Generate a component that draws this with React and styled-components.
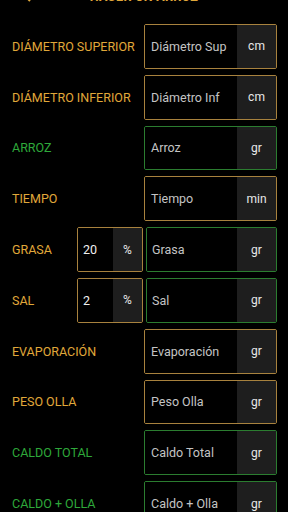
import React from "react"
import styled, { createGlobalStyle } from "styled-components"

const GlobalStyle = createGlobalStyle`
  html, body {
    margin: 0;
    padding: 0;
    background: #000;
    font-family: Roboto, "Noto Sans", "Liberation Sans", sans-serif;
  }
`

const GOLD = "#e0a83a"
const GREEN = "#2ea83a"
const GOLD_BORDER = "#a8823e"
const GREEN_BORDER = "#2b7d30"

const Screen = styled.div`
  width: 288px;
  height: 512px;
  overflow: hidden;
  background: #000;
`

// the page is scrolled, so only the bottom of the title shows
const Header = styled.div`
  height: 40px;
  margin-top: -24px;
  display: flex;
  align-items: center;
  justify-content: center;
  position: relative;
  color: ${GOLD};
  font-size: 12.5px;
  font-weight: 700;
  letter-spacing: 0.3px;
`

const Back = styled.svg`
  position: absolute;
  left: 22px;
  top: 11px;
`

const List = styled.div`
  display: flex;
  flex-direction: column;
  gap: 6px;
  padding: 8px 11px 0 12px;
`

const Row = styled.div`
  display: flex;
  align-items: center;
  height: 44.8px;
`

const Label = styled.div`
  flex: 1;
  color: ${(p) => (p.$green ? GREEN : GOLD)};
  font-size: 12.5px;
  text-transform: uppercase;
  white-space: nowrap;
`

const Box = styled.div`
  width: ${(p) => p.$w}px;
  height: 100%;
  box-sizing: border-box;
  border: 1px solid ${(p) => (p.$green ? GREEN_BORDER : GOLD_BORDER)};
  border-radius: 2px;
  display: flex;
  overflow: hidden;
  margin-left: ${(p) => p.$ml || 0}px;
`

const Value = styled.div`
  flex: 1;
  display: flex;
  align-items: center;
  padding-left: ${(p) => p.$pl}px;
  color: ${(p) => (p.$bright ? "#f0f0f0" : "#c4c4c4")};
  font-size: 12.5px;
  white-space: nowrap;
  background: #000;
`

const Unit = styled.div`
  width: ${(p) => p.$w}px;
  display: flex;
  align-items: center;
  justify-content: center;
  background: #1e1e1e;
  color: #e8e8e8;
  font-size: 12px;
`

const rows = [
  { label: "Diámetro Superior", ph: "Diámetro Sup", unit: "cm" },
  { label: "Diámetro Inferior", ph: "Diámetro Inf", unit: "cm" },
  { label: "Arroz", ph: "Arroz", unit: "gr", green: true },
  { label: "Tiempo", ph: "Tiempo", unit: "min" },
  { label: "Grasa", ph: "Grasa", unit: "gr", green: true, pct: "20" },
  { label: "Sal", ph: "Sal", unit: "gr", green: true, pct: "2" },
  { label: "Evaporación", ph: "Evaporación", unit: "gr" },
  { label: "Peso Olla", ph: "Peso Olla", unit: "gr" },
  { label: "Caldo Total", ph: "Caldo Total", unit: "gr", green: true },
  { label: "Caldo + Olla", ph: "Caldo + Olla", unit: "gr", green: true },
]

export default function App() {
  return (
    <Screen>
      <GlobalStyle />
      <Header>
        <Back width="10" height="16" viewBox="0 0 10 16">
          <path d="M8 2 L2 8 L8 14" stroke={GOLD} strokeWidth="2" fill="none" />
        </Back>
        HACER UN ARROZ
      </Header>
      <List>
        {rows.map((r) => (
          <Row key={r.label}>
            <Label $green={r.green && !r.pct}>{r.label}</Label>
            {r.pct && (
              <Box $w={66}>
                <Value $pl={5} $bright>
                  {r.pct}
                </Value>
                <Unit $w={29}>%</Unit>
              </Box>
            )}
            <Box $w={r.pct ? 131 : 133} $green={r.green} $ml={r.pct ? 3 : 0}>
              <Value $pl={r.pct ? 5 : 6}>{r.ph}</Value>
              <Unit $w={39}>{r.unit}</Unit>
            </Box>
          </Row>
        ))}
      </List>
    </Screen>
  )
}
